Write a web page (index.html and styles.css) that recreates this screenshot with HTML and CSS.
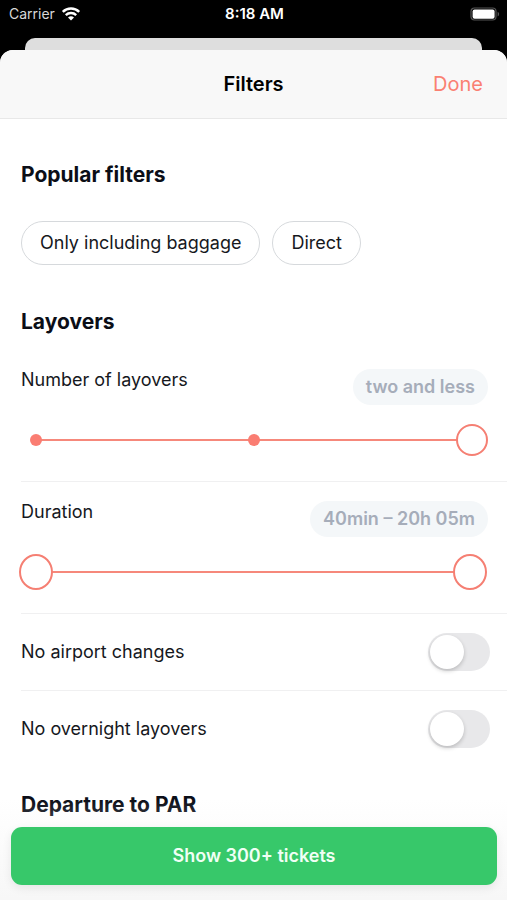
FILE: index.html
```html
<!DOCTYPE html>
<html lang="en">
<head>
<meta charset="utf-8">
<meta name="viewport" content="width=device-width, initial-scale=1">
<title>Filters</title>
<link rel="stylesheet" href="styles.css">
</head>
<body>
<div class="status-bar">
  <div class="carrier">
    <span>Carrier</span>
    <svg class="wifi" width="20" height="14" viewBox="0 0 20 14" aria-hidden="true">
      <path d="M1.8 4.9a11.8 11.8 0 0 1 16.4 0" fill="none" stroke="#fff" stroke-width="2.5"/>
      <path d="M4.8 8.2a7.4 7.4 0 0 1 10.4 0" fill="none" stroke="#fff" stroke-width="2.4"/>
      <path d="M7 10.6a4.3 4.3 0 0 1 6 0L10 13.6z" fill="#fff"/>
    </svg>
  </div>
  <span class="clock">8:18 AM</span>
  <svg class="battery" width="30" height="14" viewBox="0 0 30 14" aria-hidden="true">
    <rect x="1" y="1" width="25" height="12" rx="3.5" fill="none" stroke="#555" stroke-width="1.2"/>
    <rect x="2.6" y="2.4" width="22" height="9.4" rx="2" fill="#fff"/>
    <path d="M27.6 4.8c2 .8 2 3.8 0 4.6z" fill="#555"/>
  </svg>
</div>
<div class="sheet-behind"></div>
<div class="sheet">
  <header class="nav">
    <h1>Filters</h1>
    <button class="done" type="button">Done</button>
  </header>
  <main class="content">
    <h2>Popular filters</h2>
    <div class="chips">
      <button class="chip" type="button">Only including baggage</button>
      <button class="chip" type="button">Direct</button>
    </div>
    <h2 class="layovers-title">Layovers</h2>
    <section class="item">
      <div class="item-head">
        <label for="layovers">Number of layovers</label>
        <output class="value" for="layovers">two and less</output>
      </div>
      <div class="slider steps">
        <div class="track"><span class="dot"></span><span class="dot"></span><span class="dot last"></span></div>
        <input id="layovers" type="range" min="0" max="2" step="1" value="2">
      </div>
    </section>
    <section class="item">
      <div class="item-head">
        <label for="duration-max">Duration</label>
        <output class="value" for="duration-min duration-max">40min – 20h 05m</output>
      </div>
      <div class="slider span">
        <div class="track"></div>
        <input type="range" id="duration-min" aria-label="Minimum duration" min="40" max="1205" value="40">
        <input type="range" id="duration-max" min="40" max="1205" value="1205">
      </div>
    </section>
    <div class="item toggle-row">
      <label for="airport">No airport changes</label>
      <input class="switch" id="airport" type="checkbox" role="switch">
    </div>
    <div class="item toggle-row">
      <label for="overnight">No overnight layovers</label>
      <input class="switch" id="overnight" type="checkbox" role="switch">
    </div>
    <h2 class="departure-title">Departure to PAR</h2>
  </main>
  <footer class="action-bar">
    <button class="show" type="button">Show 300+ tickets</button>
  </footer>
</div>
</body>
</html>
```
FILE: styles.css
```css
* { box-sizing: border-box; }

body {
  margin: 0;
  height: 100vh;
  display: flex;
  flex-direction: column;
  background: #000;
  color: #16181d;
  font-family: Inter, "Liberation Sans", sans-serif;
  font-size: 18px;
  line-height: 22px;
}

button {
  font: inherit;
  color: inherit;
  border: 0;
  background: none;
  cursor: pointer;
}

h1, h2 { margin: 0; }

.status-bar {
  display: grid;
  grid-template-columns: 1fr auto 1fr;
  align-items: center;
  height: 28px;
  margin-bottom: 10px;
  padding: 0 7px 0 9px;
  color: #fff;
  font-size: 14px;
}

.carrier { display: flex; align-items: center; gap: 6px; color: #d8d8d8; }
.clock { font-size: 15px; font-weight: 600; }
.battery { justify-self: end; }

.sheet-behind {
  flex: none;
  height: 12px;
  margin: 0 25px;
  border-radius: 10px 10px 0 0;
  background: #dedede;
}

.sheet {
  position: relative;
  flex: 1;
  min-height: 0;
  display: flex;
  flex-direction: column;
  border-radius: 13px 13px 0 0;
  background: #fff;
  overflow: hidden;
}

.nav {
  flex: none;
  display: grid;
  grid-template-columns: 1fr auto 1fr;
  align-items: center;
  height: 69px;
  padding: 0 24px;
  border-bottom: 1px solid #e8e8e8;
  background: #f8f8f8;
}

.nav h1 {
  grid-column: 2;
  color: #000;
  font-size: 20px;
  font-weight: 600;
}

.done {
  justify-self: end;
  padding: 0;
  color: #fa8072;
  font-size: 20px;
}

.content {
  flex: 1;
  min-height: 0;
  padding: 42px 0 80px 21px;
  overflow-y: auto;
  scrollbar-width: none;
}

h2 {
  color: #0b0e17;
  font-size: 21px;
  font-weight: 700;
  line-height: 28px;
}

.chips { display: flex; gap: 12px; margin: 32px 0 43px; }

.chip {
  height: 44px;
  padding: 0 18px;
  border: 1px solid #d6d9dc;
  border-radius: 22px;
}

.layovers-title { margin-bottom: 14px; }
.departure-title { margin-top: 23px; }

.item { padding: 19px 0 23px; border-bottom: 1px solid #f0f0f1; }

.item-head {
  display: flex;
  justify-content: space-between;
  align-items: flex-start;
  padding-right: 19px;
}

.value {
  padding: 7px 13px;
  border-radius: 18px;
  background: #f4f7f9;
  color: #a6adba;
  font-weight: 600;
}

.slider {
  display: grid;
  align-items: center;
  height: 36px;
  margin: 17px 19px 0 -1px;
}

.slider > * { grid-area: 1 / 1; min-width: 0; }

.track {
  display: flex;
  justify-content: space-between;
  align-items: center;
  height: 2px;
  margin: 0 16px;
  background: #f6887b;
}

.dot {
  width: 12px;
  height: 12px;
  margin: 0 -6px;
  border-radius: 50%;
  background: #fa7d72;
}

.dot.last { visibility: hidden; }

.slider input {
  appearance: none;
  width: 100%;
  height: 36px;
  margin: 0;
  background: none;
  pointer-events: none;
}

.slider input::-webkit-slider-thumb {
  appearance: none;
  width: 32px;
  height: 32px;
  border: 2px solid #f57f73;
  border-radius: 50%;
  background: #fff;
  pointer-events: auto;
}

.slider.span { margin: 17px 20px 0 -2px; }
.span input::-webkit-slider-thumb { width: 34px; height: 36px; }

.toggle-row {
  display: flex;
  justify-content: space-between;
  align-items: center;
  height: 77px;
  padding: 0 17px 0 0;
}

.toggle-row + .toggle-row { border-color: transparent; }

.switch {
  appearance: none;
  width: 62px;
  height: 38px;
  margin: 0;
  padding: 2px;
  border-radius: 19px;
  background: #e8e8ea;
  cursor: pointer;
}

.switch::before {
  content: "";
  display: block;
  width: 34px;
  height: 34px;
  border-radius: 50%;
  background: #fff;
  box-shadow: 0 2px 4px rgba(0, 0, 0, 0.2);
}

.switch:checked { background: #37c86a; }
.switch:checked::before { margin-left: auto; }

.action-bar {
  position: absolute;
  inset: auto 0 0;
  padding: 28px 10px 15px 11px;
  background: linear-gradient(rgba(246, 246, 246, 0), rgba(246, 246, 246, 0.9));
}

.show {
  display: block;
  width: 100%;
  height: 58px;
  border-radius: 11px;
  background: #37c86a;
  box-shadow: 0 3px 10px rgba(0, 0, 0, 0.08);
  color: #f0fff5;
  font-weight: 600;
}
```
